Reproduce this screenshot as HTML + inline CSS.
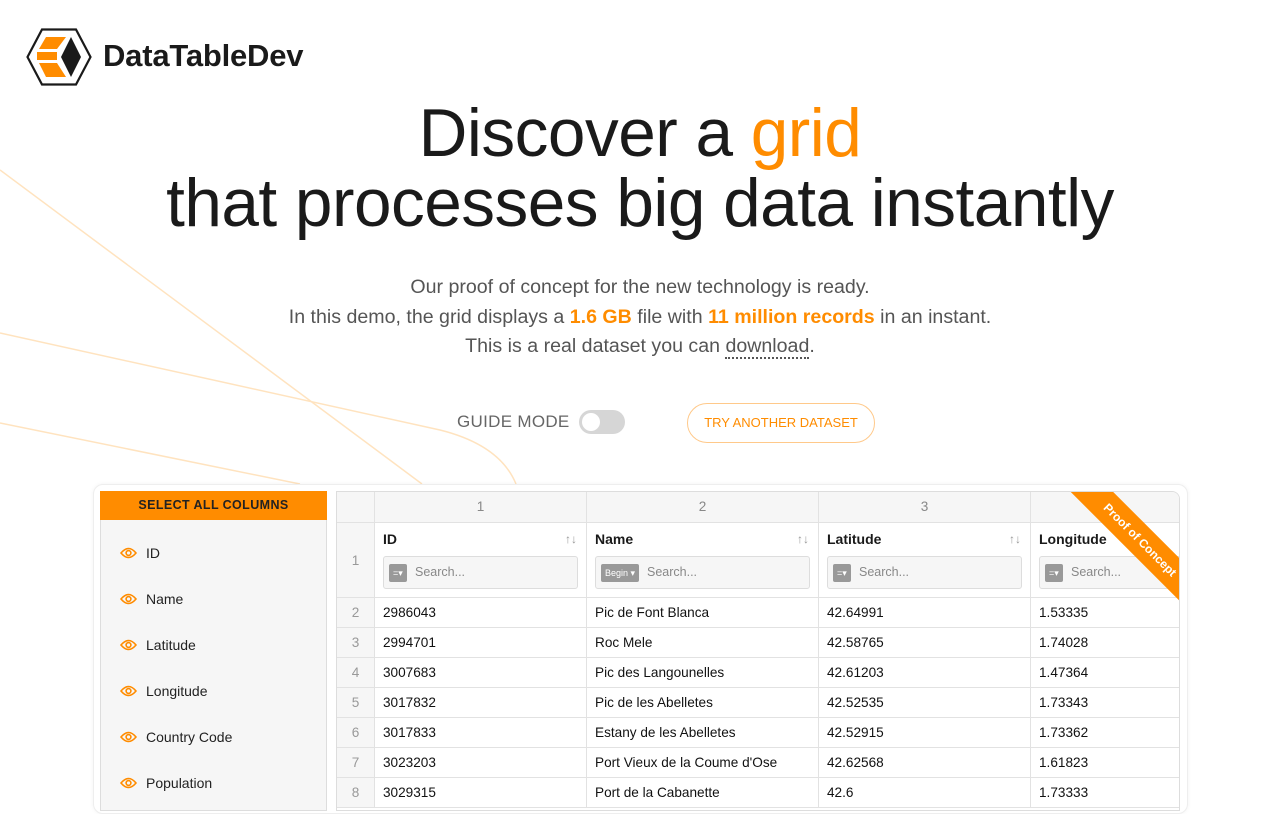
<!DOCTYPE html>
<html><head><meta charset="utf-8">
<style>
*{box-sizing:border-box;margin:0;padding:0}
body{width:1280px;height:800px;overflow:hidden;background:#fff;font-family:"Liberation Sans",Arial,sans-serif;position:relative;color:#1a1a1a}
.abs{position:absolute}
h1{position:absolute;left:0;width:1280px;text-align:center;font-weight:400;font-size:67.5px;line-height:70px;color:#1a1a1a;letter-spacing:-0.5px}
.or{color:#ff8c00}
.sub{position:absolute;left:0;width:1280px;text-align:center;font-size:19.6px;color:#555;line-height:29.5px;top:273px}
.sub b{color:#ff8c00;font-weight:700}
.box{left:93px;top:484px;width:1095px;height:330px;border:1px solid #eee;border-radius:10px;background:#fff;box-shadow:0 0 4px rgba(0,0,0,.05)}
.side{left:100px;top:491px;width:227px;height:320px;background:#f6f6f6;border:1px solid #ddd}
.sidehd{height:29px;background:#ff8c00;text-align:center;font-size:12.5px;font-weight:700;line-height:29px;letter-spacing:.4px;color:#222;margin:-1px -1px 0}
.it{position:absolute;left:19px;font-size:14px;color:#222;display:flex;align-items:center}
.it svg{margin-right:9px}
.grid{left:336px;top:491px;width:844px;height:320px;border:1px solid #ddd;border-radius:0 8px 0 0;overflow:hidden;background:#fff}
.cell{position:absolute;border-right:1px solid #e2e2e2;border-bottom:1px solid #e2e2e2;font-size:13.6px}
.hn{background:#f6f6f6;color:#888;text-align:center;line-height:30px}
.rn{background:#f6f6f6;color:#999;text-align:center}
.dt{padding-left:8px;line-height:29px;color:#111}
.ch b{position:absolute;left:8px;top:8px;font-size:14px;font-weight:700}
.ch .s{position:absolute;right:9px;top:9px;color:#999;font-size:12px}
.ch .in{position:absolute;left:8px;right:8px;top:33px;height:33px;border:1px solid #ddd;border-radius:3px;background:#f6f6f6}
.in i{position:absolute;left:5px;top:7px;height:18px;background:#999;color:#fff;font-size:9px;font-style:normal;border-radius:2px;line-height:18px;padding:0 4px}
.in span{position:absolute;top:8px;color:#888;font-size:12.5px}
.rib{position:absolute;left:703px;top:33px;width:200px;height:30px;background:#ff8c00;color:#fff;font-size:12px;font-weight:700;text-align:center;line-height:30px;transform:rotate(45deg);transform-origin:center}
</style></head><body>
<svg class="abs" style="left:0;top:0" width="1280" height="800">
<g stroke="#ffe3bf" stroke-width="1.5" fill="none">
<path d="M0 170 L422 484"/>
<path d="M0 333 L440 430 Q500 445 516 484"/>
<path d="M0 423 L300 484"/>
</g></svg>
<svg class="abs" style="left:26px;top:28px" width="66" height="58" viewBox="0 0 66 58">
<path d="M16 1.5 H50 L64.5 29 L50 56.5 H16 L1.5 29 Z" fill="#fff" stroke="#1a1a1a" stroke-width="2.2"/>
<path d="M20 9 H40 L31 21 H13 Z" fill="#ff8c00"/>
<path d="M13 35 H31 L40 49 H20 Z" fill="#ff8c00"/>
<path d="M11 24 H31 V32 H11 Z" fill="#ff8c00"/>
<path d="M45 9 L55 29 L45 49 L35 29 Z" fill="#1a1a1a"/>
</svg>
<div class="abs" style="left:103px;top:38px;font-size:31px;font-weight:600;color:#1a1a1a;letter-spacing:-0.2px">DataTableDev</div>
<h1 style="top:99px">Discover a <span class="or">grid</span></h1>
<h1 style="top:169px">that processes big data instantly</h1>
<div class="sub">Our proof of concept for the new technology is ready.<br>In this demo, the grid displays a <b>1.6 GB</b> file with <b>11 million records</b> in an instant.<br>This is a real dataset you can <span style="border-bottom:2px dotted #555">download</span>.</div>
<div class="abs" style="left:457px;top:412px;font-size:17px;color:#666;letter-spacing:.3px">GUIDE MODE</div>
<div class="abs" style="left:579px;top:410px;width:46px;height:24px;border-radius:12px;background:#d6d6d6"><div style="position:absolute;left:3px;top:3px;width:18px;height:18px;border-radius:50%;background:#fff"></div></div>
<div class="abs" style="left:687px;top:403px;width:188px;height:40px;border:1px solid #ffc98a;border-radius:20px;color:#ff8c00;font-size:13px;text-align:center;line-height:38px">TRY ANOTHER DATASET</div>
<div class="abs box"></div>
<div class="abs side"><div class="sidehd">SELECT ALL COLUMNS</div>
<div class="it" style="top:53px"><svg width="17" height="12" viewBox="0 0 17 12"><path d="M1 6 Q8.5 -3 16 6 Q8.5 15 1 6Z" fill="none" stroke="#ff8c00" stroke-width="1.6"/><circle cx="8.5" cy="6" r="2.4" fill="none" stroke="#ff8c00" stroke-width="1.6"/></svg>ID</div>
<div class="it" style="top:99px"><svg width="17" height="12" viewBox="0 0 17 12"><path d="M1 6 Q8.5 -3 16 6 Q8.5 15 1 6Z" fill="none" stroke="#ff8c00" stroke-width="1.6"/><circle cx="8.5" cy="6" r="2.4" fill="none" stroke="#ff8c00" stroke-width="1.6"/></svg>Name</div>
<div class="it" style="top:145px"><svg width="17" height="12" viewBox="0 0 17 12"><path d="M1 6 Q8.5 -3 16 6 Q8.5 15 1 6Z" fill="none" stroke="#ff8c00" stroke-width="1.6"/><circle cx="8.5" cy="6" r="2.4" fill="none" stroke="#ff8c00" stroke-width="1.6"/></svg>Latitude</div>
<div class="it" style="top:191px"><svg width="17" height="12" viewBox="0 0 17 12"><path d="M1 6 Q8.5 -3 16 6 Q8.5 15 1 6Z" fill="none" stroke="#ff8c00" stroke-width="1.6"/><circle cx="8.5" cy="6" r="2.4" fill="none" stroke="#ff8c00" stroke-width="1.6"/></svg>Longitude</div>
<div class="it" style="top:237px"><svg width="17" height="12" viewBox="0 0 17 12"><path d="M1 6 Q8.5 -3 16 6 Q8.5 15 1 6Z" fill="none" stroke="#ff8c00" stroke-width="1.6"/><circle cx="8.5" cy="6" r="2.4" fill="none" stroke="#ff8c00" stroke-width="1.6"/></svg>Country Code</div>
<div class="it" style="top:283px"><svg width="17" height="12" viewBox="0 0 17 12"><path d="M1 6 Q8.5 -3 16 6 Q8.5 15 1 6Z" fill="none" stroke="#ff8c00" stroke-width="1.6"/><circle cx="8.5" cy="6" r="2.4" fill="none" stroke="#ff8c00" stroke-width="1.6"/></svg>Population</div>
</div>
<div class="abs grid">
<div class="cell hn" style="left:0;top:0;width:38px;height:31px"></div>
<div class="cell hn" style="left:38px;top:0;width:212px;height:31px">1</div>
<div class="cell hn" style="left:250px;top:0;width:232px;height:31px">2</div>
<div class="cell hn" style="left:482px;top:0;width:212px;height:31px">3</div>
<div class="cell hn" style="left:694px;top:0;width:160px;height:31px">4</div>
<div class="cell rn" style="left:0;top:31px;width:38px;height:75px;line-height:75px">1</div>
<div class="cell ch" style="left:38px;top:31px;width:212px;height:75px"><b>ID</b><span class="s">↑↓</span><div class="in"><i>=▾</i><span style="left:31px">Search...</span></div></div>
<div class="cell ch" style="left:250px;top:31px;width:232px;height:75px"><b>Name</b><span class="s">↑↓</span><div class="in"><i>Begin ▾</i><span style="left:51px">Search...</span></div></div>
<div class="cell ch" style="left:482px;top:31px;width:212px;height:75px"><b>Latitude</b><span class="s">↑↓</span><div class="in"><i>=▾</i><span style="left:31px">Search...</span></div></div>
<div class="cell ch" style="left:694px;top:31px;width:160px;height:75px"><b>Longitude</b><div class="in" style="right:-10px"><i>=▾</i><span style="left:31px">Search...</span></div></div>
<div id="rows"></div>
<div class="rib">Proof of Concept</div>
</div>
<script>
var d=[["2986043","Pic de Font Blanca","42.64991","1.53335"],["2994701","Roc Mele","42.58765","1.74028"],["3007683","Pic des Langounelles","42.61203","1.47364"],["3017832","Pic de les Abelletes","42.52535","1.73343"],["3017833","Estany de les Abelletes","42.52915","1.73362"],["3023203","Port Vieux de la Coume d'Ose","42.62568","1.61823"],["3029315","Port de la Cabanette","42.6","1.73333"]];
var h="",L=[0,38,250,482,694],W=[38,212,232,212,160];
d.forEach(function(r,i){var t=106+i*30;h+='<div class="cell rn" style="left:0;top:'+t+'px;width:38px;height:30px;line-height:29px">'+(i+2)+'</div>';
for(var j=0;j<4;j++)h+='<div class="cell dt" style="left:'+L[j+1]+'px;top:'+t+'px;width:'+W[j+1]+'px;height:30px">'+r[j]+'</div>';});
document.getElementById("rows").outerHTML=h;
</script>
</body></html>
